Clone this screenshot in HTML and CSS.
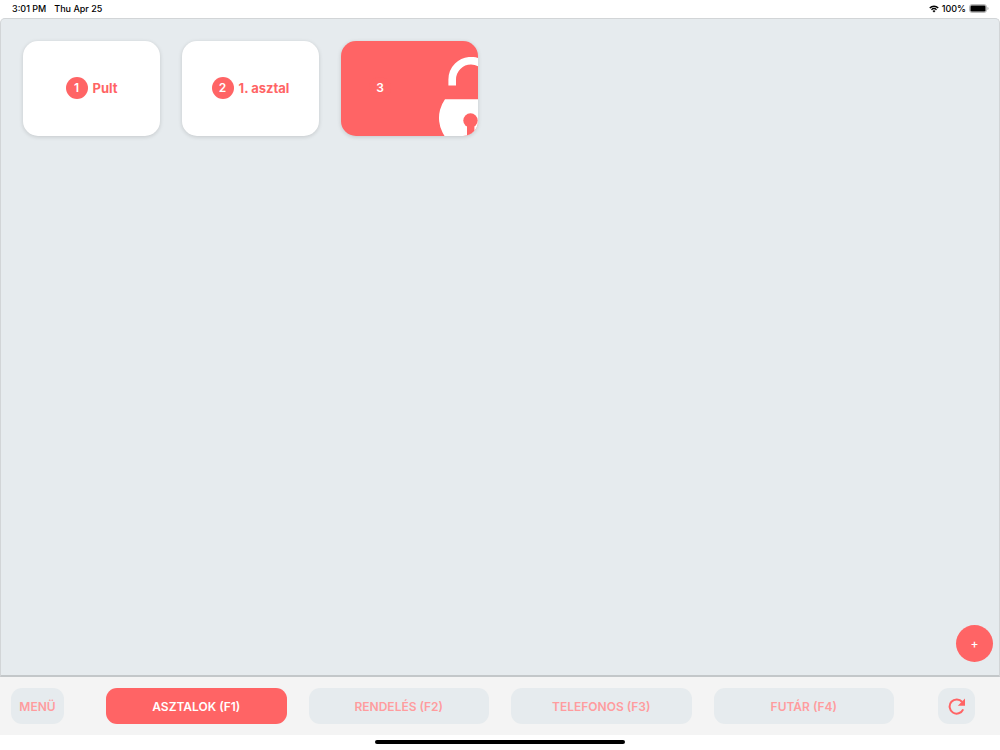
FILE: index.html
```html
<!DOCTYPE html>
<html lang="hu">

<head>
  <meta charset="UTF-8">
  <meta name="viewport" content="width=device-width, initial-scale=1">
  <title>Asztalok</title>
  <link rel="stylesheet" href="styles.css">
</head>

<body>

  <!-- Status bar -->
  <header class="status-bar">
    <div class="status-left">
      <span>3:01 PM</span>
      <span>Thu Apr 25</span>
    </div>
    <div class="status-right">
      <svg class="wifi" viewBox="0 0 20 15" aria-hidden="true">
        <path d="M1.5 5.4a12.2 12.2 0 0 1 17 0" fill="none" stroke="#000" stroke-width="2.8" />
        <path d="M4.9 8.9a7.4 7.4 0 0 1 10.2 0" fill="none" stroke="#000" stroke-width="2.6" />
        <path d="M10 14.6l-3-3.2a4.3 4.3 0 0 1 6 0z" />
      </svg>
      <span>100%</span>
      <svg class="battery" viewBox="0 0 20 9" aria-hidden="true">
        <rect x="0.5" y="0.5" width="17" height="8" rx="2.5" fill="#ddd" stroke="#bbb" />
        <rect x="1.5" y="1.5" width="15" height="6" rx="1.3" />
        <path d="M18.5 3v3c1.3-.5 1.3-2.5 0-3z" fill="#999" />
      </svg>
    </div>
  </header>

  <!-- Tables -->
  <main class="tables">
    <div class="table-grid">
      <button class="table-card">
        <span class="table-number">1</span>
        <span class="table-name">Pult</span>
      </button>
      <button class="table-card">
        <span class="table-number">2</span>
        <span class="table-name">1. asztal</span>
      </button>
      <button class="table-card locked">
        <span class="table-number">3</span>
        <svg class="lock" viewBox="0 0 64 94" aria-hidden="true">
          <path d="M13.2 28.5V22.5a18.8 18.8 0 0 1 37.6 0" fill="none" stroke="#fff" stroke-width="7.6" />
          <path d="M6 42.3A32 32 0 1 0 58 42.3z" fill="#fff" />
          <circle cx="31.5" cy="63.5" r="7.2" fill="#ff6465" />
          <path d="M28 66h7.4v14H28z" fill="#ff6465" />
        </svg>
      </button>
    </div>
    <button class="add-button">+</button>
  </main>

  <!-- Bottom navigation -->
  <footer class="bottom-bar">
    <button class="bar-button menu-button">MENÜ</button>
    <nav class="tabs">
      <button class="bar-button active">ASZTALOK (F1)</button>
      <button class="bar-button">RENDELÉS (F2)</button>
      <button class="bar-button">TELEFONOS (F3)</button>
      <button class="bar-button">FUTÁR (F4)</button>
    </nav>
    <button class="bar-button refresh-button" aria-label="Frissítés">
      <svg class="refresh" viewBox="0 0 18 18" aria-hidden="true">
        <path d="M14.2 5A7.1 7.1 0 1 0 15.2 12.4" fill="none" stroke="#ff6465" stroke-width="2" />
        <path d="M17 1.6v7.2h-7.2z" fill="#ff6465" />
      </svg>
    </button>
  </footer>

  <div class="home-area">
    <div class="home-indicator"></div>
  </div>

</body>

</html>
```
FILE: styles.css
```css
* {
  box-sizing: border-box;
}

body {
  margin: 0;
  min-height: 100vh;
  display: flex;
  flex-direction: column;
  background-color: #fff;
  font-family: Inter, "Liberation Sans", sans-serif;
}

button {
  margin: 0;
  padding: 0;
  border: none;
  font-family: inherit;
  cursor: pointer;
}

/* Status bar */
.status-bar {
  display: flex;
  justify-content: space-between;
  align-items: center;
  height: 18px;
  padding: 0 11px 1px 12px;
  font-size: 9px;
  font-weight: 500;
  color: #000;
}

.status-left {
  display: flex;
  gap: 8px;
}

.status-right {
  display: flex;
  align-items: center;
  gap: 3px;
}

.wifi {
  width: 10px;
  height: 8px;
}

.battery {
  width: 20px;
  height: 9px;
}

/* Tables */
.tables {
  flex: 1;
  position: relative;
  padding: 22px;
  background-color: #e6ebee;
  border: 1px solid #d2d5d7;
  border-bottom: 2px solid #c3c7c9;
  border-radius: 5px 5px 0 0;
}

.table-grid {
  display: flex;
  flex-wrap: wrap;
  gap: 22px;
}

.table-card {
  position: relative;
  display: flex;
  align-items: center;
  justify-content: center;
  gap: 5px;
  width: 137px;
  height: 95px;
  padding-bottom: 2px;
  overflow: hidden;
  border-radius: 15px;
  background-color: #fff;
  color: #ff6465;
  box-shadow: 0 1px 4px rgba(0, 0, 0, 0.15);
}

.table-number {
  width: 22px;
  height: 22px;
  border-radius: 50%;
  background-color: #ff6465;
  color: #fff;
  font-size: 12px;
  font-weight: 600;
  line-height: 22px;
  text-align: center;
}

.table-name {
  font-size: 13px;
  font-weight: 700;
}

.table-card.locked {
  justify-content: flex-start;
  padding-left: 28px;
  background-color: #ff6465;
}

/* Runs over the right edge of the card */
.lock {
  position: absolute;
  top: 16px;
  left: 98px;
  width: 64px;
  height: 94px;
}

.add-button {
  position: absolute;
  right: 6px;
  bottom: 13px;
  width: 37px;
  height: 37px;
  border-radius: 50%;
  background-color: #ff6465;
  color: #fff;
  font-size: 12px;
  font-weight: 500;
}

/* Bottom navigation */
.bottom-bar {
  display: flex;
  align-items: center;
  height: 58px;
  padding: 0 25px 0 11px;
  background-color: #f4f4f4;
}

.tabs {
  flex: 1;
  display: flex;
  gap: 22px;
  margin: 0 44px 0 42px;
}

.tabs .bar-button {
  flex: 1;
}

.bar-button {
  height: 36px;
  border-radius: 11px;
  background-color: #e6ebee;
  color: #ff9c9e;
  font-size: 12px;
  font-weight: 600;
}

.bar-button.active {
  background-color: #ff6465;
  color: #fff;
}

.menu-button {
  width: 53px;
}

.refresh-button {
  display: flex;
  align-items: center;
  justify-content: center;
  width: 37px;
}

.refresh {
  width: 18px;
  height: 18px;
}

/* Home indicator */
.home-area {
  display: flex;
  justify-content: center;
  height: 15px;
  padding-top: 5px;
}

.home-indicator {
  width: 25%;
  height: 4px;
  border-radius: 2px;
  background-color: #000;
}
```
